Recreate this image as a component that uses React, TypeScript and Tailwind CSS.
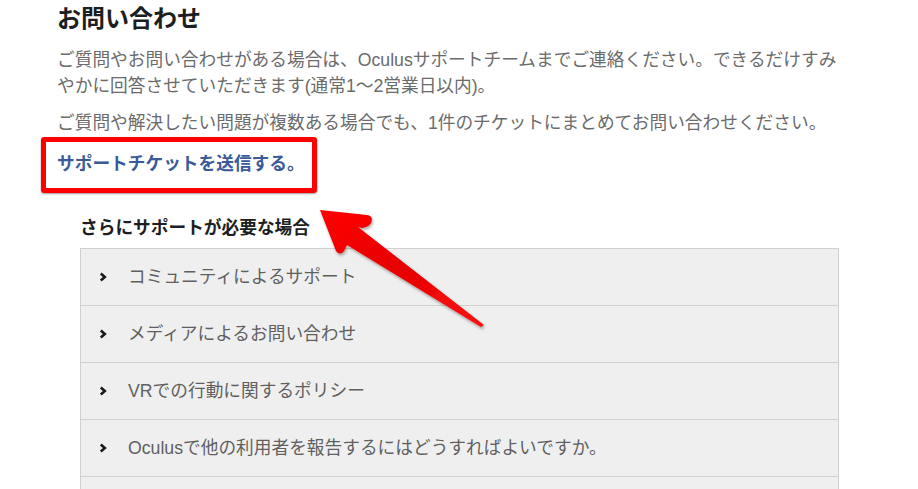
import { FC } from "react";

const items = [
    "コミュニティによるサポート",
    "メディアによるお問い合わせ",
    "VRでの行動に関するポリシー",
    "Oculusで他の利用者を報告するにはどうすればよいですか。",
    "",
];

const Chevron: FC = () => (
    <svg width="8" height="10" viewBox="0 0 8 10" className="shrink-0">
        <polyline points="1.8,1.5 5.8,5 1.8,8.5" fill="none" stroke="#1a1a1a" strokeWidth="2.6" strokeLinejoin="miter" />
    </svg>
);

const App: FC = () => {
    return (
        <div
            className="relative w-[918px] h-[489px] overflow-hidden bg-white"
            style={{ fontFamily: '"Liberation Sans", "Noto Sans CJK JP", sans-serif' }}
        >
            <div className="pl-[57px] pt-[3px]">
                <h1 className="text-[24px] leading-[32px] font-bold text-[#1c1e21]">お問い合わせ</h1>
                <p className="mt-[12px] w-[792px] text-[17.7px] leading-[26px] text-[#6b6b6b]">
                    ご質問やお問い合わせがある場合は、Oculusサポートチームまでご連絡ください。できるだけすみやかに回答させていただきます(通常1～2営業日以内)。
                </p>
                <p className="mt-[11px] text-[17.7px] leading-[26px] text-[#6b6b6b]">
                    ご質問や解決したい問題が複数ある場合でも、1件のチケットにまとめてお問い合わせください。
                </p>
                <a className="block mt-[15px] text-[17.7px] leading-[26px] font-bold text-[#3b5a9a]">サポートチケットを送信する。</a>

                {/* more support */}
                <div className="ml-[23px] mt-[38px] w-[759px]">
                    <h2 className="text-[17.7px] leading-[26px] font-bold text-[#1c1e21]">さらにサポートが必要な場合</h2>
                    <ul className="mt-[7px] border border-[#d0d0d0] bg-[#efefef]">
                        {items.map((item, i) => (
                            <li
                                key={i}
                                className="flex items-center h-[57px] border-b border-[#d0d0d0] pl-[18px] text-[17.7px] text-[#5f5f5f]"
                            >
                                {item && (
                                    <>
                                        <Chevron />
                                        <span className="ml-[21px]">{item}</span>
                                    </>
                                )}
                            </li>
                        ))}
                    </ul>
                </div>
            </div>

            {/* annotation: red box + arrow */}
            <div className="absolute left-[41px] top-[137px] w-[276px] h-[56px] border-[5px] border-[#ff0000] rounded-[3px] shadow-[0_1px_2px_rgba(0,0,0,0.4)]" />
            <svg className="absolute left-0 top-0" width="918" height="489" viewBox="0 0 918 489">
                <defs>
                    <linearGradient id="arrowFill" x1="0" y1="0" x2="1" y2="1">
                        <stop offset="0" stopColor="#ff0000" />
                        <stop offset="0.5" stopColor="#e60000" />
                        <stop offset="1" stopColor="#ff1010" />
                    </linearGradient>
                    <filter id="arrowShadow" x="-10%" y="-10%" width="130%" height="130%">
                        <feDropShadow dx="1" dy="2" stdDeviation="1.5" floodColor="#000" floodOpacity="0.35" />
                    </filter>
                </defs>
                <path
                    d="M320,210 L367,215 Q374,216 371,223 Q369,227 362,228 L358,227 L484,325 L481,327 L347,245 L344,251 Q340,256 336,251 Z"
                    fill="url(#arrowFill)"
                    filter="url(#arrowShadow)"
                />
            </svg>
        </div>
    );
};

export default App;
